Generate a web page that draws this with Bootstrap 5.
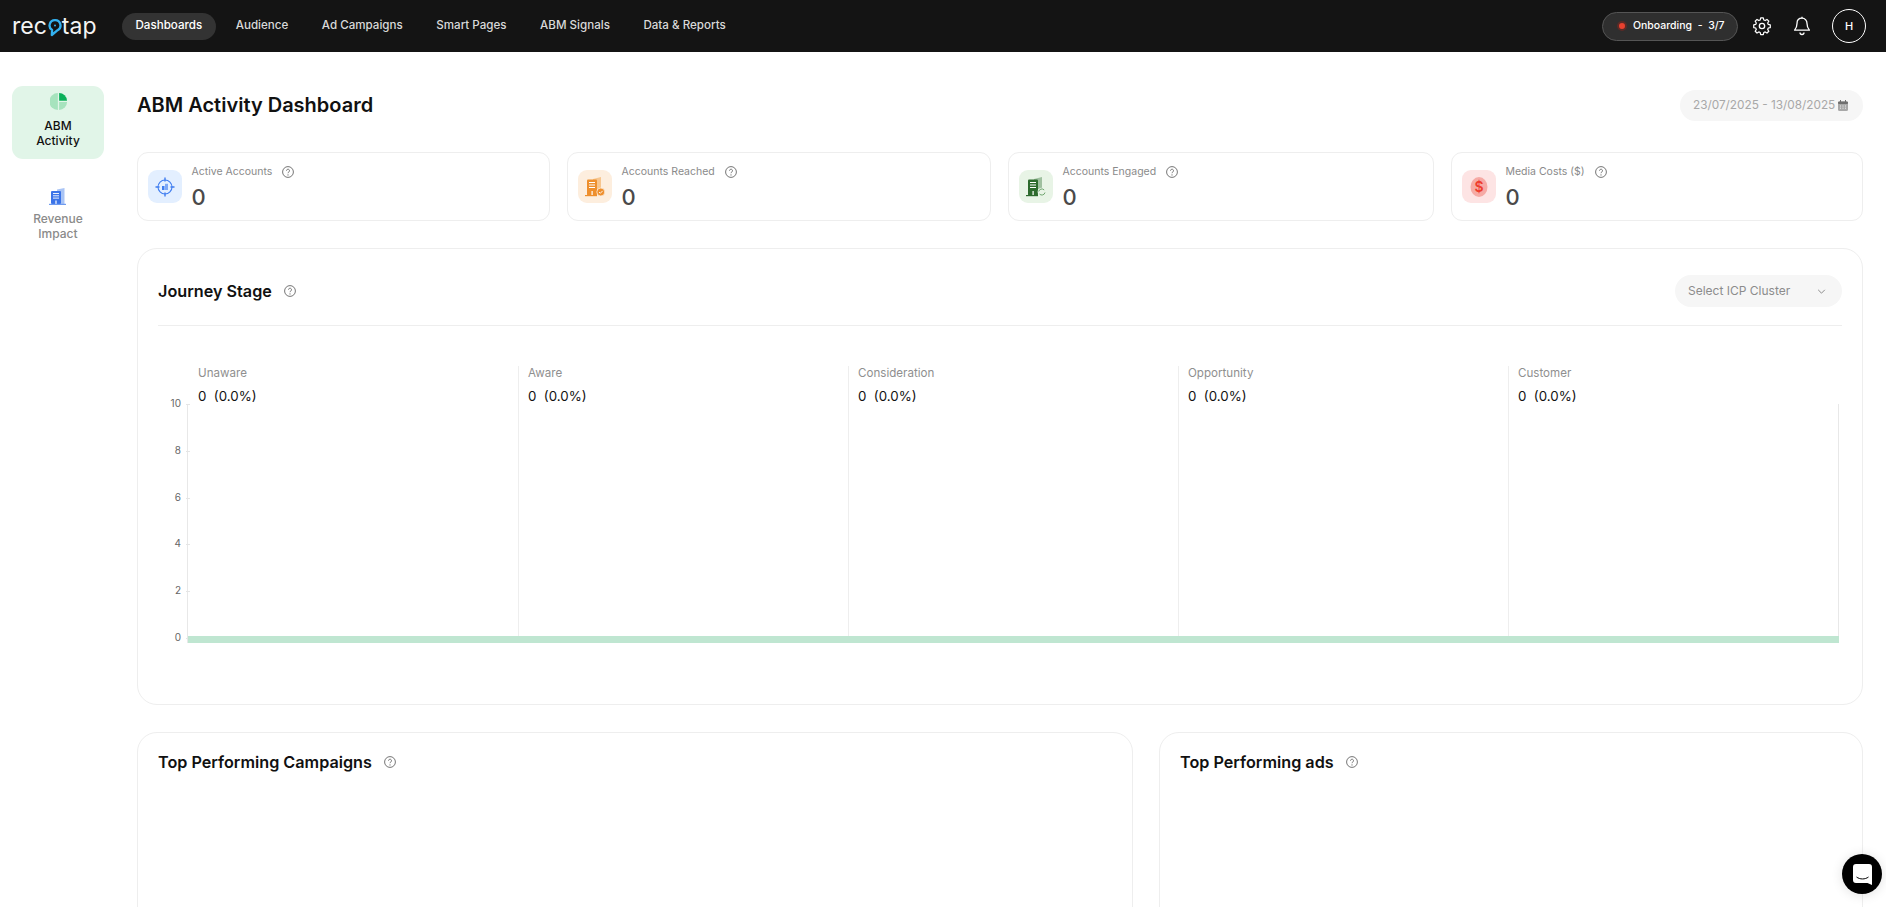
<!doctype html>
<html lang="en">
<head>
<meta charset="utf-8">
<title>ABM Activity Dashboard</title>
<link href="https://cdn.jsdelivr.net/npm/bootstrap@5.3.0/dist/css/bootstrap.min.css" rel="stylesheet">
<style>
html,body{height:907px;overflow:hidden;background:#fff}
body{font-family:Inter,"Liberation Sans",sans-serif;color:#111;font-size:12px}
.topbar{height:52px;background:#141414;padding:0 20px 0 12px}
.brand{font-weight:400;font-size:23px;line-height:1;color:#f4f4f4;width:84px;margin-right:25.5px;white-space:nowrap}
.brand svg{flex:none;margin:3px 0 0 1px}
.menu{gap:5.5px}
.menu-link{font-size:11.6px;font-weight:500;color:#d9d9d9;height:27px;padding:0 14px;border-radius:14px;text-decoration:none}
.menu-link.on{background:#333;color:#fff}
.onb{height:29px;width:136px;border:1px solid #555;background:#2f2f2f;border-radius:15px;color:#fff;font-size:10.5px;font-weight:500;padding-left:14px;gap:6px;white-space:pre;margin-right:-7px}
.onb-dot{width:10px;height:10px;border-radius:50%;background:#e8412f;border:2px solid #5c2a26}
.avatar{width:34px;height:34px;border:1px solid #fff;border-radius:50%;color:#fff;font-size:11px;font-weight:500}
.top-icons{gap:21px}
.side{width:137px;flex:none;padding:34px 33px 0 12px}
.side-item{width:92px;height:73px;border-radius:11px;padding-top:7px;text-align:center;font-size:12px;font-weight:500;line-height:15px;color:#8a8a8a;margin-bottom:19px}
.side-item svg{display:block;margin:0 auto 8px}
.side-item.on{background:#e1f5e8;color:#111}
.side-item.next{padding-top:10px}
.side-item.next svg{margin-bottom:6px}
.main-col{width:1726px;flex:none;padding-top:38px}
.page-head{height:31px;margin-bottom:31px;margin-top:0}
.page-title{font-size:20px;font-weight:600;margin:0;line-height:31px;color:#111}
.date-pill{width:183px;height:31px;background:#f6f6f6;border-radius:16px;color:#a8a8a8;font-size:11.8px;padding-left:13px;gap:3px;white-space:nowrap}
.kpis{display:grid;grid-template-columns:413px 424px 426px 412px;column-gap:17px;height:69px}
.kpi{border:1px solid #eee;border-radius:11px;background:#fff;padding-left:10px;gap:9.5px}
.kpi-icon{width:34px;height:33px;border-radius:9px;flex:none}
.kpi-label{font-size:10.5px;color:#8a8a8a;line-height:14px;gap:10px;margin-top:2px}
.kpi-num{font-size:22px;font-weight:500;color:#4a4a4a;line-height:26px;margin-top:5px}
.panel{border:1px solid #eee;border-radius:20px;background:#fff}
.journey{height:457px;margin-top:26.5px;padding:0 20px}
.panel-head{height:77.5px;border-bottom:1px solid #eee;padding-top:9px}
.panel-title{font-size:16.2px;font-weight:600;margin:0;color:#111;gap:12px}
.select-pill{width:167px;height:32px;background:#f6f6f6;border-radius:16px;color:#8c8c8c;font-size:12px;padding:0 16px 0 13px}
.chart{margin-top:40px}
.yaxis{width:30px;flex:none;height:239px;margin-top:38px;font-size:10px;color:#666;border-right:1px solid #e8e8e8}
.ticks{height:234px}
.tick{height:0;line-height:0;position:relative;padding-right:6px;text-align:right;top:-1px}
.tick::after{content:"";position:absolute;right:-3px;top:1px;width:4px;height:1px;background:#e5e5e5}
.yline{width:1px;height:239px;background:#e8e8e8;flex:none;margin-top:38px}
.plot{position:relative;width:1650px;height:277px;display:grid;grid-template-columns:repeat(5,1fr)}
.stage{border-left:1px solid #eee;padding-left:9px;height:274px}
.stage.first{border-left-color:transparent}
.stage-name{font-size:11.6px;color:#8f8f8f;line-height:15px}
.stage-val{font-size:13.3px;color:#111;line-height:17px;margin-top:7px}
.bar{position:absolute;left:0;right:-1px;bottom:0;height:7px;background:#bfe6d1}
.bottom-grid{display:grid;grid-template-columns:996px 704px;column-gap:26px;margin-top:27px}
.low{height:300px;padding:20px}
.chat{position:fixed;left:1842px;top:854px;width:40px;height:40px;border-radius:50%;background:#000;box-shadow:0 1px 12px rgba(0,0,0,.12)}
</style>
</head>
<body>
<svg width="0" height="0" class="position-absolute">
<symbol id="q" viewBox="0 0 12 12"><circle cx="6" cy="6" r="5.4" fill="none" stroke="#666" stroke-width=".9"/><path d="M4.500 4.700a1.500 1.500 0 1 1 2.400 1.200c-.6.4-.9.7-.9 1.300" fill="none" stroke="#666" stroke-width=".9"/><circle cx="6" cy="8.900" r=".55" fill="#666"/></symbol>
</svg>

<nav class="topbar navbar-dark d-flex align-items-center">
  <div class="brand d-flex align-items-center">rec<svg width="14" height="18" viewBox="0 0 14 18"><path d="M7 1.200a5.300 5.300 0 0 1 2.600 10L3.800 16l.3-5A5.300 5.300 0 0 1 7 1.200z" fill="none" stroke="#33b1f0" stroke-width="2.300" stroke-linejoin="round"/><circle cx="7" cy="6.500" r="1" fill="#33b1f0"/></svg>tap</div>
  <div class="menu d-flex align-items-center flex-grow-1">
    <a class="menu-link on d-flex align-items-center" href="#">Dashboards</a>
    <a class="menu-link d-flex align-items-center" href="#">Audience</a>
    <a class="menu-link d-flex align-items-center" href="#">Ad Campaigns</a>
    <a class="menu-link d-flex align-items-center" href="#">Smart Pages</a>
    <a class="menu-link d-flex align-items-center" href="#">ABM Signals</a>
    <a class="menu-link d-flex align-items-center" href="#">Data &amp; Reports</a>
  </div>
  <div class="d-flex align-items-center top-icons">
    <div class="onb d-flex align-items-center"><span class="onb-dot"></span><span>Onboarding  -  3/7</span></div>
    <svg width="20" height="20" viewBox="0 0 24 24" fill="none" stroke="#fff" stroke-width="1.600" stroke-linejoin="round"><circle cx="12" cy="12" r="3.200"/><path d="M10.300 2.500h3.400l.6 2.700 1.900.8 2.300-1.500 2.400 2.400-1.500 2.300.8 1.900 2.600.6v3.400l-2.600.6-.8 1.900 1.500 2.300-2.400 2.400-2.300-1.500-1.900.8-.6 2.700h-3.400l-.6-2.700-1.900-.8-2.300 1.500-2.400-2.400 1.500-2.300-.8-1.900-2.600-.6v-3.400l2.600-.6.8-1.900-1.500-2.300 2.400-2.400 2.300 1.500 1.900-.8z" transform="translate(12 12) scale(.92) translate(-12 -13.100)"/></svg>
    <svg width="18" height="20" viewBox="0 0 18 20" fill="none" stroke="#fff" stroke-width="1.300" stroke-linejoin="round"><path d="M9 2.200c-3.300 0-5 2.500-5 5.300 0 3.500-1.200 5.300-2.400 6.700h14.800c-1.200-1.400-2.400-3.200-2.400-6.700 0-2.800-1.700-5.300-5-5.300z"/><path d="M7 16.500a2 2 0 0 0 4 0M9 .8v1.400"/></svg>
    <div class="avatar d-flex align-items-center justify-content-center">H</div>
  </div>
</nav>

<div class="d-flex">
  <aside class="side">
    <div class="side-item on">
      <svg width="17" height="17" viewBox="0 0 16 16"><path d="M7.400 0v16A8 8 0 0 1 7.400 0z" fill="#a6e3bd"/><path d="M8.600 0A7.500 7.500 0 0 1 16 7.200H8.600z" fill="#0bb05a"/><path d="M8.600 8.400H16A7.500 7.500 0 0 1 8.600 16z" fill="#a6e3bd"/></svg>
      ABM<br>Activity
    </div>
    <div class="side-item next">
      <svg width="18" height="17" viewBox="0 0 18 17"><path d="M8 1.500 15.500 0v16H8z" fill="#a9c4f5"/><rect x="2" y="3" width="10" height="13" rx="1" fill="#3b74e8"/><path d="M4 5.500h6M4 7.800h6M4 10.100h6" stroke="#fff" stroke-width=".9"/><rect x="6.400" y="12.500" width="1.200" height="3.500" fill="#fff"/><rect x="0" y="15.800" width="17" height="1.200" fill="#6f9bef"/></svg>
      Revenue<br>Impact
    </div>
  </aside>

  <main class="main-col">
    <div class="page-head d-flex justify-content-between align-items-center">
      <h1 class="page-title">ABM Activity Dashboard</h1>
      <div class="date-pill d-flex align-items-center">23/07/2025 - 13/08/2025
        <svg width="10" height="11" viewBox="0 0 10 11"><rect y="1.500" width="10" height="9.500" rx="1.500" fill="#a8a8a8"/><rect y="1.500" width="10" height="2.500" rx="1" fill="#6f6f6f"/><path d="M2.500 0v2M7.500 0v2" stroke="#6f6f6f"/><path d="M2 6h6M2 8.200h6" stroke="#eee" stroke-dasharray="1 1.500"/></svg>
      </div>
    </div>

    <div class="kpis">
      <div class="kpi d-flex align-items-center">
        <div class="kpi-icon d-flex align-items-center justify-content-center" style="background:#e3efff">
          <svg width="20" height="20" viewBox="0 0 20 20" fill="none" stroke="#3f7df0" stroke-width="1.100"><circle cx="10" cy="10" r="7"/><path d="M10 .5v4M10 15.500v4M.5 10h4M15.500 10h4" stroke-width="1.400"/><rect x="7" y="9" width="2.500" height="4" fill="#3f7df0" stroke="none"/><rect x="10" y="6.800" width="3" height="6.200" fill="#7ea8f5" stroke="none"/></svg>
        </div>
        <div>
          <div class="kpi-label d-flex align-items-center">Active Accounts <svg width="12" height="12"><use href="#q"/></svg></div>
          <div class="kpi-num">0</div>
        </div>
      </div>
      <div class="kpi d-flex align-items-center">
        <div class="kpi-icon d-flex align-items-center justify-content-center" style="background:#fdeede">
          <svg width="21" height="20" viewBox="0 0 21 20"><path d="M8 2l8-2v12H8z" fill="#f7c68f"/><rect x="2" y="2.500" width="10" height="16" rx="1" fill="#ee8f2d"/><path d="M4 5.500h6M4 8h6M4 10.500h6" stroke="#fff" stroke-width="1"/><rect x="6.500" y="14" width="1.200" height="4.500" fill="#fff"/><rect y="18" width="12" height="1.200" fill="#ee8f2d"/><circle cx="15.800" cy="15" r="4" fill="#ee8f2d" stroke="#fdeede" stroke-width=".8"/><path d="M14 15l1.300 1.300 2.300-2.400" fill="none" stroke="#fff" stroke-width=".9"/></svg>
        </div>
        <div>
          <div class="kpi-label d-flex align-items-center">Accounts Reached <svg width="12" height="12"><use href="#q"/></svg></div>
          <div class="kpi-num">0</div>
        </div>
      </div>
      <div class="kpi d-flex align-items-center">
        <div class="kpi-icon d-flex align-items-center justify-content-center" style="background:#e8f4e6">
          <svg width="21" height="20" viewBox="0 0 21 20"><path d="M8 2l8-2v12H8z" fill="#9fc09f"/><rect x="2" y="2.500" width="10" height="16" rx="1" fill="#2d6a2d"/><path d="M4 5.500h6M4 8h6M4 10.500h6" stroke="#fff" stroke-width="1"/><rect x="6.500" y="14" width="1.200" height="4.500" fill="#fff"/><rect y="18" width="12" height="1.200" fill="#2d6a2d"/><circle cx="15.800" cy="15" r="4.200" fill="#e8f4e6"/><path d="M12.700 14.500a3.200 3.200 0 0 1 5.500-1.500M19 15.500a3.200 3.200 0 0 1-5.500 1.500" fill="none" stroke="#6fa56f" stroke-width="1"/></svg>
        </div>
        <div>
          <div class="kpi-label d-flex align-items-center">Accounts Engaged <svg width="12" height="12"><use href="#q"/></svg></div>
          <div class="kpi-num">0</div>
        </div>
      </div>
      <div class="kpi d-flex align-items-center">
        <div class="kpi-icon d-flex align-items-center justify-content-center" style="background:#fde4e4">
          <svg width="20" height="22" viewBox="0 0 20 22"><ellipse cx="10" cy="11" rx="8.500" ry="10" fill="#f6aaa5"/><text x="10" y="16" text-anchor="middle" font-family="Inter,sans-serif" font-size="14" font-weight="600" fill="#ee3d2f">$</text></svg>
        </div>
        <div>
          <div class="kpi-label d-flex align-items-center">Media Costs ($) <svg width="12" height="12"><use href="#q"/></svg></div>
          <div class="kpi-num">0</div>
        </div>
      </div>
    </div>

    <section class="panel journey">
      <div class="panel-head d-flex justify-content-between align-items-center">
        <h2 class="panel-title d-flex align-items-center">Journey Stage <svg width="12" height="12"><use href="#q"/></svg></h2>
        <div class="select-pill d-flex align-items-center justify-content-between">Select ICP Cluster
          <svg width="9" height="5" viewBox="0 0 10 6" fill="none" stroke="#777" stroke-width="1"><path d="M1 1l4 4 4-4"/></svg>
        </div>
      </div>
      <div class="chart d-flex">
        <div class="yaxis">
          <div class="ticks d-flex flex-column justify-content-between">
            <div class="tick">10</div><div class="tick">8</div><div class="tick">6</div><div class="tick">4</div><div class="tick">2</div><div class="tick">0</div>
          </div>
        </div>
        <div class="plot">
          <div class="stage first"><div class="stage-name">Unaware</div><div class="stage-val">0&nbsp; (0.0%)</div></div>
          <div class="stage"><div class="stage-name">Aware</div><div class="stage-val">0&nbsp; (0.0%)</div></div>
          <div class="stage"><div class="stage-name">Consideration</div><div class="stage-val">0&nbsp; (0.0%)</div></div>
          <div class="stage"><div class="stage-name">Opportunity</div><div class="stage-val">0&nbsp; (0.0%)</div></div>
          <div class="stage"><div class="stage-name">Customer</div><div class="stage-val">0&nbsp; (0.0%)</div></div>
          <div class="bar"></div>
        </div>
        <div class="yline"></div>
      </div>
    </section>

    <div class="bottom-grid">
      <section class="panel low"><h2 class="panel-title d-flex align-items-center">Top Performing Campaigns <svg width="12" height="12"><use href="#q"/></svg></h2></section>
      <section class="panel low"><h2 class="panel-title d-flex align-items-center">Top Performing ads <svg width="12" height="12"><use href="#q"/></svg></h2></section>
    </div>
  </main>
</div>

<div class="chat d-flex align-items-center justify-content-center">
  <svg width="19" height="21" viewBox="0 0 19 21"><path d="M3 0h13a3 3 0 0 1 3 3v18l-4.500-2H3a3 3 0 0 1-3-3V3a3 3 0 0 1 3-3z" fill="#fff"/><path d="M3.500 13c3.500 2.600 8.500 2.600 12 0" fill="none" stroke="#000" stroke-width="1"/></svg>
</div>
<script src="https://cdn.jsdelivr.net/npm/bootstrap@5.3.0/dist/js/bootstrap.bundle.min.js"></script>
</body>
</html>
